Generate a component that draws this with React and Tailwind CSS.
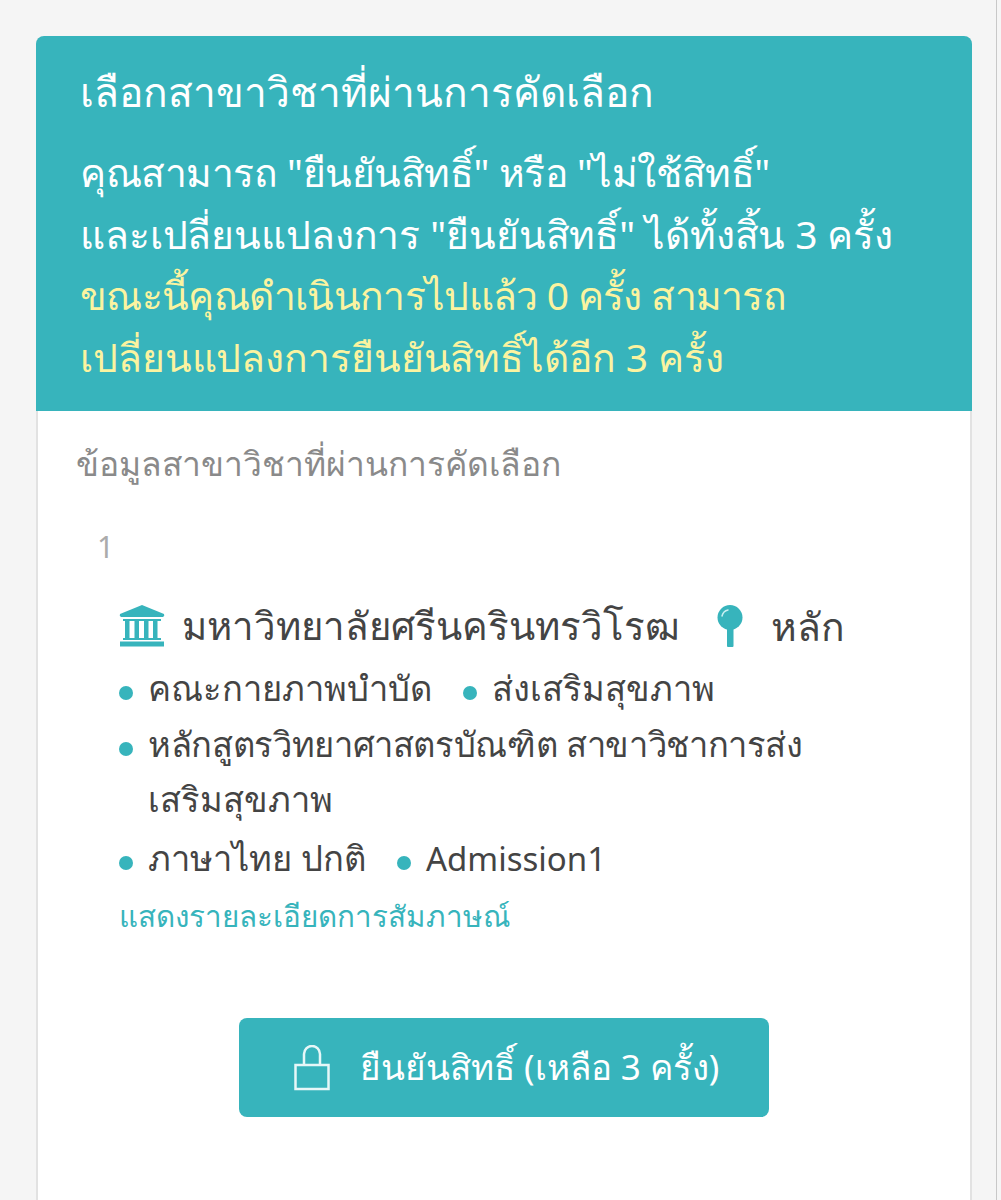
const font = { fontFamily: '"Noto Sans", "Open Sans", "DejaVu Sans", sans-serif' };

function Dot() {
  return <span className="inline-block w-[14px] h-[14px] rounded-full bg-[#37b4bc] mr-[15px] align-[1px]" />;
}

function BankIcon() {
  return (
    <svg width="47" height="42" viewBox="0 0 47 42" className="shrink-0">
      <path d="M23 0 L45 9 Q46 11 44 12 H2 Q0 11 1 9 Z" fill="#37b4bc" />
      <path d="M4 14H42V16H4ZM6 16h4.500v17H6ZM15.500 16h4.500v17h-4.500ZM25 16h4.500v17H25ZM34 16h4.500v17H34ZM4 33H42V35H4ZM1 36.500H45V41.500H1Z" fill="#37b4bc" />
    </svg>
  );
}

function PinIcon() {
  return (
    <svg width="26" height="42" viewBox="0 0 26 42" className="shrink-0">
      <rect x="10" y="22" width="6.500" height="20" rx="1" fill="#37b4bc" />
      <circle cx="13" cy="12.500" r="12.500" fill="#37b4bc" />
      <path d="M5 11 A8 8 0 0 1 11 5" stroke="#c9f0f2" strokeWidth="1.500" fill="none" strokeLinecap="round" />
    </svg>
  );
}

function LockIcon() {
  return (
    <svg width="36" height="46" viewBox="0 0 36 46" fill="none" stroke="#e6f7f8" strokeWidth="2.500" className="shrink-0">
      <rect x="1.500" y="20" width="33" height="24" />
      <path d="M10 20 V9 A8 8 0 0 1 26 9 V20" />
    </svg>
  );
}

export default function App() {
  return (
    <div style={font} className="w-[1001px] h-[1200px] overflow-hidden bg-[#f5f5f5] pt-[36px] pl-[36px] relative">
      <div className="w-[936px] h-[1164px] bg-white border-x-2 border-[#e2e2e2] rounded-t-lg">
        <div className="-mx-[2px] h-[375px] bg-[#37b4bc] rounded-t-lg pl-[44px] pt-[28px] text-white">
          <h1 className="text-[40.700px] leading-[54px] font-normal">เลือกสาขาวิชาที่ผ่านการคัดเลือก</h1>
          <div className="mt-[23px] text-[39px] leading-[61.500px]">
            <p className="tracking-[-0.45px]">คุณสามารถ "ยืนยันสิทธิ์" หรือ "ไม่ใช้สิทธิ์"</p>
            <p className="tracking-[-0.12px]">และเปลี่ยนแปลงการ "ยืนยันสิทธิ์" ได้ทั้งสิ้น 3 ครั้ง</p>
            <p className="text-[#fbf3a0] tracking-[-0.7px]">ขณะนี้คุณดำเนินการไปแล้ว 0 ครั้ง สามารถ</p>
            <p className="text-[#fbf3a0] tracking-[-0.1px]">เปลี่ยนแปลงการยืนยันสิทธิ์ได้อีก 3 ครั้ง</p>
          </div>
        </div>
        <div className="pl-[38px]">
          <h2 className="mt-[28px] text-[33.600px] leading-[48px] text-[#8a8a8a]">ข้อมูลสาขาวิชาที่ผ่านการคัดเลือก</h2>
          <div className="mt-[40px] pl-[21px] text-[30px] leading-[40px] text-[#ababab]">1</div>
          <div className="mt-[38px] pl-[43px] flex items-center h-[42px]">
            <BankIcon />
            <span className="ml-[16px] text-[38.400px] text-[#444]">มหาวิทยาลัยศรีนครินทรวิโรฒ</span>
            <span className="ml-[37px]"><PinIcon /></span>
            <span className="ml-[28px] text-[39px] text-[#444]">หลัก</span>
          </div>
          <div className="mt-[13px] pl-[43px] w-[780px] text-[34.500px] leading-[55.500px] text-[#444]">
            <p><Dot />คณะกายภาพบำบัด<span className="ml-[31px]"><Dot /></span>ส่งเสริมสุขภาพ</p>
            <p className="tracking-[-0.35px]"><Dot />หลักสูตรวิทยาศาสตรบัณฑิต สาขาวิชาการส่ง</p>
            <p className="pl-[29px]">เสริมสุขภาพ</p>
            <p className="mt-[3px]"><Dot />ภาษาไทย ปกติ<span className="ml-[31px]"><Dot /></span><span className="text-[33px]">Admission1</span></p>
          </div>
          <p className="mt-[4px] pl-[43px] text-[29.600px] leading-[52px] text-[#37b4bc]">แสดงรายละเอียดการสัมภาษณ์</p>
        </div>
        <div className="mt-[76px] ml-[201px] w-[530px] h-[99px] rounded-lg bg-[#37b4bc] flex items-center pl-[55px] text-white">
          <LockIcon />
          <span className="ml-[30px] text-[35px]">ยืนยันสิทธิ์ (เหลือ 3 ครั้ง)</span>
        </div>
      </div>
      <div className="absolute top-0 right-[4px] h-full w-[1px] bg-[#c8c8c8]" />
    </div>
  );
}
